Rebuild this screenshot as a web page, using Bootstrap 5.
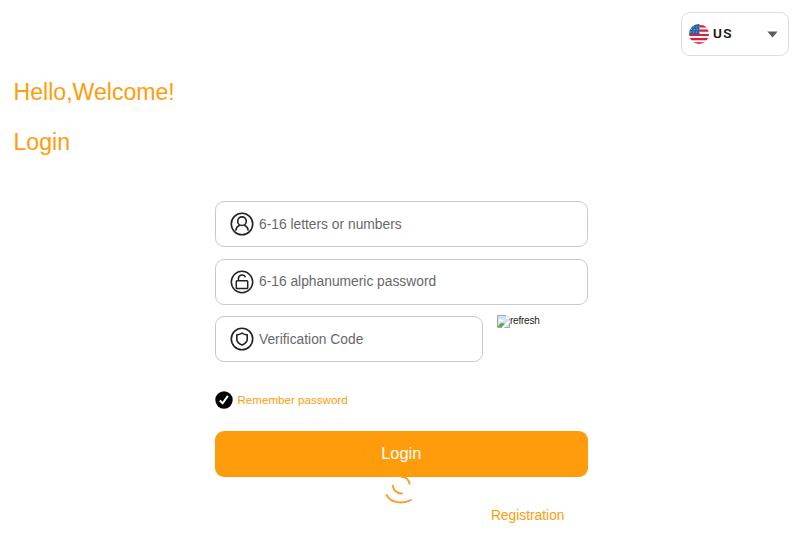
<!DOCTYPE html>
<html lang="en">
<head>
<meta charset="utf-8">
<meta name="viewport" content="width=device-width, initial-scale=1">
<title>Login</title>
<link href="https://cdn.jsdelivr.net/npm/bootstrap@5.3.0/dist/css/bootstrap.min.css" rel="stylesheet">
<style>
body{font-family:"Liberation Sans",Arial,sans-serif;background:#fff;height:543px;overflow:hidden;--brand:#ff9c0c}
.lang{width:108px;height:44px;margin:12px 11px 0 0;border:1px solid #dcdcdf;border-radius:9px;padding:0 10px 0 7px}
.lang span{font:500 13.5px/20px Roboto,sans-serif;letter-spacing:1.4px;color:#111;margin:-2px 0 0 4px;-webkit-text-stroke:.15px #111}
.brand-text{color:var(--brand)}
.greet{padding-left:13.5px;margin-top:11px}
.greet h1{font-size:23.1px;line-height:50px;font-weight:400;margin:0}
.login-form{width:372.5px;margin:34px 0 0 215px}
.field{height:46px;border:1px solid #c9c9cc;border-radius:9px;padding:0 14px;background:#fff;margin-bottom:11.5px}
.field input{font-size:13.8px;line-height:20px;padding:1px 0 0;margin-left:5.5px;border:0;outline:0;background:none;width:100%;min-width:0}
.field input::placeholder{color:#68686b;opacity:1}
.field svg{flex:none;margin-left:-.5px}
.code{width:268px}
.captcha{font-size:10px;letter-spacing:-.23px;line-height:12px;color:#222;margin:-2px 0 0 14px;height:14px}
.remember{margin-top:17px;height:18px;font-size:11.6px}
.remember svg{margin-left:-.5px}
.remember span{margin-left:5px}
.submit{height:46px;margin-top:22px;background:var(--brand);color:#fff;font-size:16.4px;border-radius:9px;border:0;padding:0 0 1px}
.submit:hover{background:var(--brand);color:#fff}
.spin{left:384px;top:474px}
.reg{font-size:13.8px;line-height:20px;margin:29px 23px 0 0}
</style>
<script src="https://cdn.jsdelivr.net/npm/bootstrap@5.3.0/dist/js/bootstrap.bundle.min.js"></script>
</head>
<body>
<header class="d-flex justify-content-end">
  <div class="lang d-flex align-items-center" role="button">
    <svg width="20" height="20" viewBox="0 0 20 20"><defs><clipPath id="flag"><circle cx="10" cy="10" r="10"/></clipPath></defs>
      <g clip-path="url(#flag)"><path fill="#f7f3f5" d="M0 0h20v20H0z"/><path stroke="#d02446" stroke-width="2.2" d="M0 2.300h20M0 6.700h20M0 11h20M0 15.200h20M0 19.400h20"/><path fill="#2264aa" d="M0 0h10.500v10H0z"/><path stroke="#a9c6e4" stroke-width=".9" stroke-dasharray="1 1.9" d="M4 3h7M2 5.500h9M1 8h10"/></g></svg>
    <span>US</span>
    <svg class="ms-auto" width="11" height="7" viewBox="0 0 11 7"><path fill="#5c5c60" d="M.4.4h10.200L5.500 6.500z"/></svg>
  </div>
</header>
<section class="greet brand-text"><h1>Hello,Welcome!</h1><h1>Login</h1></section>
<form class="login-form">
  <div class="field d-flex align-items-center">
    <svg width="24" height="24" viewBox="0 0 24 24" fill="none" stroke="#222" stroke-width="1.6"><circle cx="12" cy="12" r="10.7"/><circle cx="12" cy="9.200" r="4.300"/><path d="M5.800 18.600c.3-3.100 2-4.600 4-5.400M14.200 13.200c2 .8 3.700 2.300 4 5.400"/></svg>
    <input type="text" placeholder="6-16 letters or numbers">
  </div>
  <div class="field d-flex align-items-center">
    <svg width="24" height="24" viewBox="0 0 24 24" fill="none" stroke="#222" stroke-width="1.5"><circle cx="12" cy="12" r="10.700"/><rect x="6.300" y="10.800" width="11.400" height="7.700" rx=".8"/><path d="M8.400 11V8.800c0-4.700 6.100-4.900 7-1.500"/></svg>
    <input type="text" placeholder="6-16 alphanumeric password">
  </div>
  <div class="d-flex align-items-start">
    <div class="field code d-flex align-items-center">
      <svg width="24" height="24" viewBox="0 0 24 24" fill="none" stroke="#222" stroke-width="1.6"><circle cx="12" cy="12" r="10.700"/><path stroke-linejoin="round" d="M12 6.100c1.500 1 3.300 1.700 5.200 1.800v4.400c0 2.700-2.400 4.600-5.200 5.700-2.800-1.100-5.200-3-5.200-5.700V7.900c1.900-.1 3.700-.8 5.200-1.800z"/></svg>
      <input type="text" placeholder="Verification Code">
    </div>
    <div class="captcha d-flex align-items-center">
      <svg width="13" height="13" viewBox="0 0 13 13"><path fill="#d1e0f5" stroke="#929497" stroke-width=".8" d="M.5.5h8.500l3.500 3.500v8.500H.5z"/><path fill="#fff" d="M2 5.500c0-2 2.500-2 2.700-.7 1.500-.3 1.800 1.400.8 1.400H2zM9 .5V4h3.500z"/><path fill="#54b234" d="M1 12c1-3.500 4-5.500 7-3l-3 3z"/><path stroke="#fff" stroke-width="1.800" d="M5.500 13 13 6"/></svg>
      <span>refresh</span>
    </div>
  </div>
  <div class="remember d-flex align-items-center brand-text">
    <svg width="18" height="18" viewBox="0 0 18 18"><circle cx="9" cy="9" r="8.700"/><path fill="none" stroke="#fff" stroke-width="2" d="m4.800 9.500 2.800 2.800 5.300-7.500"/></svg>
    <span>Remember password</span>
  </div>
  <button type="button" class="submit btn w-100 d-block">Login</button>
  <div class="reg text-end brand-text">Registration</div>
</form>
<svg class="spin position-absolute" width="32" height="32" viewBox="384 474 32 32" fill="none" stroke="#f7a12b" stroke-width="1.900" stroke-linecap="round"><path d="M386.500 495C391 503 402.500 504.500 411 500M392.800 485.800C393.400 490.500 397.500 494 402 493.500M401.500 476.700C405.500 476.700 409 479.700 409.500 483.700"/></svg>
</body>
</html>
